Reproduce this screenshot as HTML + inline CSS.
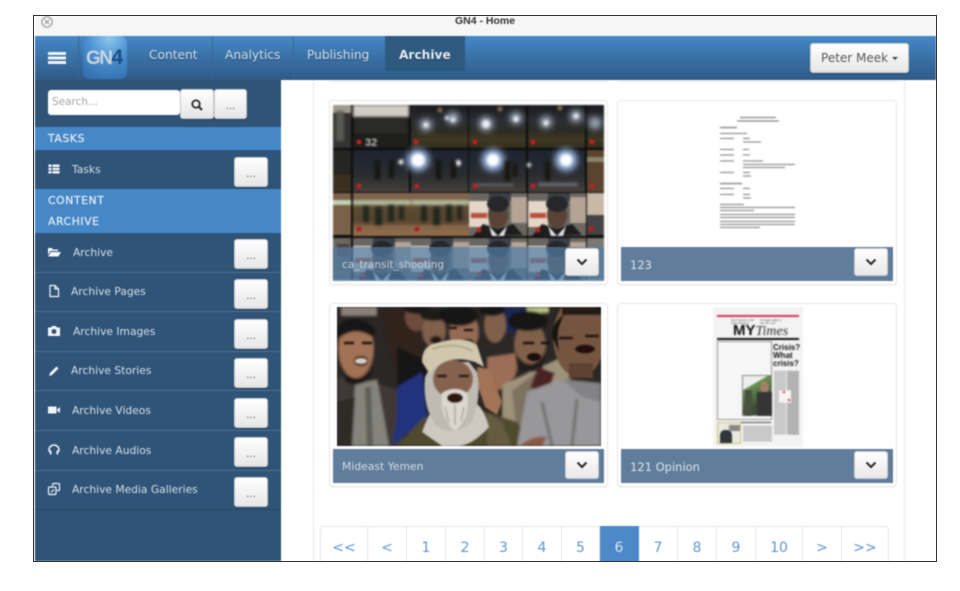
<!DOCTYPE html>
<html><head><meta charset="utf-8"><title>GN4 - Home</title>
<style>
html,body{margin:0;padding:0;background:#fff;width:960px;height:591px;overflow:hidden}
body{font-family:"DejaVu Sans","Liberation Sans",sans-serif;position:relative}
.a{position:absolute;box-sizing:border-box}
#p{left:0;top:0;width:960px;height:591px;filter:blur(.45px)}
.btn{position:absolute;box-sizing:border-box;background:linear-gradient(#fff,#e6e6e6);border:1px solid #ccc;border-radius:3px;color:#555;text-align:center;box-shadow:0 1px 1px rgba(0,0,0,.2)}
.dots{width:34px;height:30px;font-size:10px;line-height:33px;left:234px}
.nav{position:absolute;top:47px;font-size:12.2px;line-height:16px;color:#d3e2ef;text-shadow:0 1px 1px rgba(0,0,0,.4)}
.sep{position:absolute;top:36px;width:1px;height:43px;background:#33689b}
.band{position:absolute;left:35px;width:246px;background:#4587c7;color:#e6eef6;font-size:10.8px;letter-spacing:.6px;padding-left:13px;box-sizing:border-box;-webkit-text-stroke:.2px #e6eef6}
.row{position:absolute;left:35px;width:246px;height:1px;background:#52718f}
.lab{position:absolute;font-size:10.7px;line-height:14px;color:#d5dfe8;white-space:nowrap;margin-top:1px}
.ic{position:absolute;left:47px;width:14px;height:14px;fill:#f2f5f8}
.card{position:absolute;box-sizing:border-box;background:#fff;border:1px solid #e8e8e8;border-radius:4px;box-shadow:0 1px 1px rgba(0,0,0,.05)}
.bar{position:absolute;background:#617d9c;color:#dbe3ea;font-size:10.8px;line-height:36px;padding-left:9px;box-sizing:border-box;height:34px;white-space:nowrap}
.chev{position:absolute;width:34px;height:28px;background:linear-gradient(#fff,#e8e8e8);border:1px solid #ccc;border-radius:3px;box-sizing:border-box}
.chev svg{position:absolute;left:10px;top:9px;width:12px;height:8px}
.pg{position:absolute;top:526px;height:36px;border-right:1px solid #e6e6e6;border-top:1px solid #e6e6e6;box-sizing:border-box;text-align:center;color:#5f97d3;font-size:14px;line-height:42px;background:#fff}
</style></head><body>
<div class="a" id="p">
<div class="a" style="left:35px;top:16px;width:901px;height:20px;background:#f6f6f6"></div>
<svg class="a" style="left:40px;top:15px" width="14" height="14" viewBox="0 0 14 14"><circle cx="7" cy="7" r="5.2" fill="none" stroke="#8a8a8a" stroke-width="1"/><path d="M4.6 4.6l4.8 4.8M9.4 4.6l-4.8 4.8" stroke="#8a8a8a" stroke-width=".9"/></svg>
<div class="a" style="left:400px;top:15px;width:170px;text-align:center;font:bold 10.5px/13px 'Liberation Sans',sans-serif;color:#333">GN4 - Home</div>

<!-- navbar -->
<div class="a" style="left:35px;top:36px;width:901px;height:44px;background:linear-gradient(#4587c7,#2f5a85)"></div>
<div class="a" style="left:35px;top:80px;width:246px;height:47px;background:#2f5478"></div>
<div class="a" style="left:48px;top:52px;width:18px;height:3px;background:#f0f4f8;box-shadow:0 4.5px 0 #f0f4f8,0 9px 0 #f0f4f8"></div>
<div class="sep" style="left:78px"></div>
<div class="a" style="left:83px;top:36px;width:44px;height:43px;border-radius:7px;background:radial-gradient(circle at 60% 5%,#8cc6ef,#4a8fcf 45%,#2f6ba8);font:bold 19px/43px 'Liberation Sans',sans-serif;letter-spacing:-1.5px;padding-left:3px;color:#c9d6e0">GN<span style="color:#1c4d83;font-size:21px">4</span></div>
<div class="nav" style="left:149px">Content</div>
<div class="sep" style="left:212px"></div>
<div class="nav" style="left:225px">Analytics</div>
<div class="sep" style="left:293px"></div>
<div class="nav" style="left:307px">Publishing</div>
<div class="a" style="left:385px;top:36px;width:80px;height:35px;background:#2f5a80"></div>
<div class="nav" style="left:399px;font-weight:bold;color:#e4ebf2;font-size:12.2px">Archive</div>
<div class="btn" style="left:810px;top:43px;width:99px;height:30px;font-size:12px;line-height:29px;color:#5a5a5a;white-space:nowrap">Peter Meek <span style="display:inline-block;width:0;height:0;border:3.5px solid transparent;border-top-color:#444;border-bottom:0;vertical-align:2px"></span></div>

<!-- sidebar -->
<div class="a" style="left:35px;top:150px;width:246px;height:411px;background:#2f5478"></div>
<div class="a" style="left:48px;top:90px;width:132px;height:25px;background:#fff;border-radius:3px;font-size:10.5px;line-height:25px;padding-left:4px;color:#a5a5a5">Search...</div>
<div class="btn" style="left:180px;top:89px;width:34px;height:30px"><svg width="14" height="14" viewBox="0 0 14 14" style="position:absolute;left:9px;top:8px"><circle cx="6" cy="6" r="3.7" fill="none" stroke="#333" stroke-width="1.9"/><path d="M8.8 8.8l3.2 3.2" stroke="#333" stroke-width="2.2"/></svg></div>
<div class="btn" style="left:214px;top:89px;width:33px;height:30px;font-size:10px;line-height:33px">...</div>

<div class="band" style="top:127px;height:23px;line-height:23px">TASKS</div>
<div class="band" style="top:189px;height:44px;line-height:21px;padding-top:1px">CONTENT<br>ARCHIVE</div>

<svg class="ic" style="top:162px" viewBox="0 0 14 14"><path d="M1 2h12v10H1z M5 2v10 M1 5.4h12M1 8.6h12" fill="#f2f5f8" stroke="#2f5478" stroke-width=".9"/></svg>
<div class="lab" style="left:72px;top:162px">Tasks</div>
<div class="btn dots" style="top:157px">...</div>

<svg class="ic" style="top:245px" viewBox="0 0 14 14"><path d="M1 3h4l1 1.5h5V6H3.5L1 10z M4 7h10l-2.6 4.5H1z"/></svg>
<div class="lab" style="left:73px;top:245px">Archive</div>
<div class="btn dots" style="top:239px">...</div>
<div class="row" style="top:272px"></div>

<svg class="ic" style="top:284px" viewBox="0 0 14 14"><path d="M3 1.5h5l3.5 3.5v7.500H3z M8 1.5V5h3.5" fill="none" stroke="#f2f5f8" stroke-width="1.2"/></svg>
<div class="lab" style="left:71px;top:284px">Archive Pages</div>
<div class="btn dots" style="top:279px">...</div>
<div class="row" style="top:311px"></div>

<svg class="ic" style="top:324px" viewBox="0 0 14 14"><path fill-rule="evenodd" d="M1 3.500h3l1-1.500h4l1 1.500h3v8.500H1z M7 5a2.500 2.500 0 1 0 .01 0z"/></svg>
<div class="lab" style="left:73px;top:324px">Archive Images</div>
<div class="btn dots" style="top:319px">...</div>
<div class="row" style="top:351px"></div>

<svg class="ic" style="top:364px" viewBox="0 0 14 14"><path d="M9.500 2.500l2 2L5 11l-3 1 1-3z"/></svg>
<div class="lab" style="left:71px;top:363px">Archive Stories</div>
<div class="btn dots" style="top:358px">...</div>
<div class="row" style="top:390px"></div>

<svg class="ic" style="top:403px" viewBox="0 0 14 14"><path d="M1 3.500h8.500v7H1z M10 6.500l3-2.500v6l-3-2.500z"/></svg>
<div class="lab" style="left:72px;top:403px">Archive Videos</div>
<div class="btn dots" style="top:398px">...</div>
<div class="row" style="top:430px"></div>

<svg class="ic" style="top:443px" viewBox="0 0 14 14"><path d="M2 8.500V7a5 5 0 0 1 10 0v1.500" fill="none" stroke="#f2f5f8" stroke-width="1.500"/><path d="M2 7.500h2.500v4H3zM9.500 7.500H12l-1 4H9.500z"/></svg>
<div class="lab" style="left:72px;top:443px">Archive Audios</div>
<div class="btn dots" style="top:437px">...</div>
<div class="row" style="top:470px"></div>

<svg class="ic" style="top:482px" viewBox="0 0 14 14"><path d="M5.500 4V2.500a1 1 0 0 1 1-1h5a1 1 0 0 1 1 1v5a1 1 0 0 1-1 1H10M2.500 5h5.500a1 1 0 0 1 1 1v5.500a1 1 0 0 1-1 1H2.500a1 1 0 0 1-1-1V6a1 1 0 0 1 1-1zM4 10.500L7 7.500" fill="none" stroke="#f2f5f8" stroke-width="1.200"/></svg>
<div class="lab" style="left:72px;top:482px">Archive Media Galleries</div>
<div class="btn dots" style="top:477px">...</div>
<div class="row" style="top:509px;background:#274766"></div>

<!-- content -->
<div class="a" style="left:281px;top:80px;width:655px;height:481px;background:#fff"></div>
<div class="a" style="left:313px;top:80px;width:592px;height:481px;border-left:1px solid #e8e8e8;border-right:1px solid #e8e8e8"></div>
<div class="a" style="left:329px;top:80px;width:279px;height:2px;border-bottom:1px solid #e6e6e6"></div>
<div class="a" style="left:617px;top:80px;width:280px;height:2px;border-bottom:1px solid #e6e6e6"></div>

<div class="card" style="left:329px;top:100px;width:279px;height:185px"></div>
<div class="card" style="left:617px;top:100px;width:280px;height:185px"></div>
<div class="card" style="left:329px;top:303px;width:279px;height:184px"></div>
<div class="card" style="left:617px;top:303px;width:280px;height:184px"></div>

<!-- contact sheet -->
<svg class="a" style="left:333px;top:105px;filter:blur(.7px)" width="271" height="175" viewBox="0 0 271 175">
<defs>
<filter id="b1" x="-100%" y="-100%" width="300%" height="300%"><feGaussianBlur stdDeviation="1.200"/></filter>
<filter id="b2" x="-100%" y="-100%" width="300%" height="300%"><feGaussianBlur stdDeviation="3.500"/></filter>
<linearGradient id="n" x1="0" y1="0" x2="0" y2="1"><stop offset="0" stop-color="#19191b"/><stop offset=".35" stop-color="#2a2d33"/><stop offset=".6" stop-color="#2c2c24"/><stop offset=".8" stop-color="#3f3822"/><stop offset="1" stop-color="#302c1c"/></linearGradient>
<linearGradient id="n2" x1="0" y1="0" x2="0" y2="1"><stop offset="0" stop-color="#1c2430"/><stop offset=".6" stop-color="#2a2c30"/><stop offset="1" stop-color="#45403a"/></linearGradient>
<linearGradient id="t" x1="0" y1="0" x2="0" y2="1"><stop offset="0" stop-color="#8a6a50"/><stop offset=".3" stop-color="#5e4e36"/><stop offset=".6" stop-color="#55452f"/><stop offset="1" stop-color="#8c6a4a"/></linearGradient>
<g id="f"><rect width="58" height="43" fill="#6a6762"/><rect x="0" y="8" width="20" height="26" fill="#e4d6c8"/><rect x="2" y="20" width="16" height="5" fill="#b8503c"/><rect x="42" y="4" width="16" height="26" fill="#b4a496"/><rect x="20" width="22" height="8" fill="#3c4048"/><ellipse cx="29" cy="22" rx="10" ry="13" fill="#5a4234"/><ellipse cx="29" cy="11" rx="11" ry="8" fill="#27272a"/><path d="M4 43l10-12 15 5 15-5 10 11z" fill="#1d1d1d"/><path d="M20 33l9 10 9-10-3 10H23z" fill="#e8e8e8"/><circle cx="10" cy="37" r="2.500" fill="#c02020"/></g>
<g id="b"><rect width="58" height="43" fill="url(#t)"/><rect y="7" width="58" height="5" fill="#c8d8b8" opacity=".8" filter="url(#b1)"/><g fill="#24261c" filter="url(#b1)"><rect x="10" y="13" width="6" height="16"/><rect x="22" y="14" width="7" height="20"/><rect x="35" y="12" width="6" height="17"/><rect x="46" y="13" width="5" height="14"/></g><rect y="32" width="58" height="11" fill="#94704e" opacity=".6"/><circle cx="6" cy="36" r="2.500" fill="#b02020"/></g>
</defs>
<rect width="271" height="175" fill="#0c0c0c"/>
<!-- row 1 -->
<rect width="18" height="43" fill="#333230"/><rect width="18" height="8" fill="#a09a90"/><rect x="3" y="6" width="8" height="30" fill="#5a5a54" filter="url(#b1)"/>
<rect x="20" width="56" height="43" fill="#1e1e1c"/><rect x="20" width="56" height="12" fill="#d0ccc6" filter="url(#b1)"/><rect x="22" y="14" width="52" height="14" fill="#2c2c28" filter="url(#b1)"/><text x="32" y="41" font-size="11" font-weight="bold" fill="#bbb" font-family="Liberation Sans">32</text><circle cx="26" cy="37" r="2.500" fill="#c02020"/>
<rect x="78" width="57" height="43" fill="url(#n)"/><rect x="136" width="57" height="43" fill="url(#n)"/><rect x="195" width="57" height="43" fill="url(#n)"/><rect x="254" width="17" height="43" fill="url(#n)"/>
<g filter="url(#b2)" fill="#aab6c8"><circle cx="93" cy="20" r="6"/><circle cx="120" cy="13" r="6"/><circle cx="153" cy="19" r="7"/><circle cx="183" cy="13" r="6"/><circle cx="213" cy="17" r="6"/><circle cx="243" cy="11" r="6"/><circle cx="262" cy="18" r="6"/></g>
<g filter="url(#b1)" fill="#f0f4f6"><circle cx="93" cy="20" r="2.600"/><circle cx="120" cy="15" r="2.400"/><circle cx="114" cy="13" r="2"/><circle cx="153" cy="19" r="4"/><circle cx="183" cy="14" r="2.800"/><circle cx="213" cy="18" r="2.600"/><circle cx="243" cy="11" r="2.600"/></g>
<g filter="url(#b1)" fill="#b8946a"><circle cx="107" cy="5" r="2"/><circle cx="167" cy="4" r="2"/><circle cx="227" cy="3" r="2"/></g>
<g fill="#c02020"><circle cx="83" cy="37" r="2.500"/><circle cx="142" cy="37" r="2.500"/><circle cx="200" cy="37" r="2.500"/><circle cx="259" cy="37" r="2.500"/></g>
<!-- row 2 -->
<rect y="45" width="18" height="42" fill="#252622"/><rect y="70" width="18" height="17" fill="#3a3020"/>
<rect x="20" y="45" width="56" height="42" fill="url(#n2)"/>
<rect x="78" y="45" width="57" height="42" fill="url(#n2)"/><rect x="136" y="45" width="57" height="42" fill="url(#n2)"/><rect x="195" y="45" width="57" height="42" fill="url(#n2)"/>
<rect x="254" y="45" width="17" height="42" fill="#5a4430"/><rect x="254" y="52" width="17" height="5" fill="#8a8468"/>
<g filter="url(#b2)" fill="#a8c4f0"><circle cx="85" cy="55" r="11"/><circle cx="160" cy="55" r="11"/><circle cx="233" cy="55" r="11"/></g>
<g filter="url(#b1)" fill="#fff"><circle cx="85" cy="55" r="6.500"/><circle cx="160" cy="55" r="6"/><circle cx="233" cy="55" r="6"/><circle cx="68" cy="57" r="2.500"/><circle cx="125" cy="58" r="3"/><circle cx="196" cy="60" r="2"/></g>
<g fill="#12160f" filter="url(#b1)"><rect x="42" y="55" width="5" height="20"/><rect x="56" y="55" width="5" height="18"/><rect x="103" y="55" width="5" height="20"/><rect x="118" y="56" width="5" height="17"/><rect x="172" y="56" width="5" height="20"/><rect x="212" y="56" width="5" height="20"/><rect x="180" y="58" width="4" height="14"/></g>
<g fill="#6c7078" filter="url(#b1)"><rect x="205" y="78" width="40" height="3"/><rect x="140" y="79" width="40" height="2"/></g>
<g fill="#c02020"><circle cx="26" cy="81" r="2.500"/><circle cx="84" cy="81" r="2.500"/><circle cx="142" cy="81" r="2.500"/><circle cx="200" cy="81" r="2.500"/><circle cx="259" cy="81" r="2.500"/></g>
<!-- row 3 -->
<rect y="88" width="18" height="42" fill="#7a6248"/><rect y="95" width="18" height="5" fill="#c0d0b0"/>
<use href="#b" x="20" y="88"/><use href="#b" x="78" y="88"/>
<use href="#f" x="136" y="88"/><use href="#f" x="195" y="88"/>
<rect x="254" y="88" width="17" height="42" fill="#c8b8a8"/><rect x="254" y="110" width="17" height="20" fill="#444"/><circle cx="258" cy="124" r="2.500" fill="#c02020"/>
<!-- row 4 -->
<rect y="133" width="18" height="42" fill="#6a6762"/><rect x="4" y="139" width="12" height="12" fill="#514038"/>
<use href="#f" x="20" y="133"/><use href="#f" x="78" y="133"/><use href="#f" x="136" y="133"/><use href="#f" x="195" y="133"/>
<rect x="254" y="133" width="17" height="42" fill="#7a7672"/>
<rect y="172" width="271" height="3" fill="#0c0c0c" opacity="0"/>
</svg>
<div class="bar" style="left:333px;top:247px;width:271px;background:rgba(80,125,165,.72);color:#c3ced8;font-size:10.5px">ca_transit_shooting</div>
<div class="chev" style="left:565px;top:248px"><svg viewBox="0 0 12 8"><path d="M1.500 1.500L6 6l4.500-4.500" fill="none" stroke="#333" stroke-width="2.200"/></svg></div>

<!-- doc page -->
<svg class="a" style="left:720px;top:116px;filter:blur(.55px)" width="76" height="114" viewBox="0 0 76 114"><g fill="#666">
<rect x="20" y="1" width="36" height="1"/><rect x="17" y="4.500" width="42" height="1"/>
<rect x="0" y="11" width="17" height="1.100"/><rect x="0" y="17" width="27" height=".9"/>
<rect x="0" y="22" width="14" height=".9"/><rect x="23" y="22" width="7" height=".9"/><rect x="23" y="25.500" width="18" height=".9"/>
<rect x="0" y="33" width="14" height=".9"/><rect x="23" y="33" width="6" height=".9"/>
<rect x="0" y="38.500" width="14" height=".9"/><rect x="23" y="38.500" width="7" height=".9"/>
<rect x="0" y="44.500" width="14" height=".9"/><rect x="23" y="44.500" width="20" height=".9"/><rect x="23" y="48" width="52" height=".9"/><rect x="23" y="51" width="42" height=".9"/>
<rect x="0" y="56" width="14" height=".9"/><rect x="23" y="56" width="7" height=".9"/><rect x="23" y="59.500" width="8" height=".9"/>
<rect x="0" y="67" width="22" height="1.100"/>
<rect x="0" y="72" width="14" height=".9"/><rect x="23" y="72" width="7" height=".9"/>
<rect x="0" y="78" width="14" height=".9"/><rect x="23" y="78" width="7" height=".9"/><rect x="23" y="81.500" width="8" height=".9"/>
<rect x="0" y="88" width="24" height=".9"/><rect x="0" y="91" width="75" height=".9"/><rect x="0" y="94" width="34" height=".9"/>
<rect x="0" y="98" width="75" height=".9"/><rect x="0" y="101" width="75" height=".9"/>
<rect x="0" y="105" width="75" height=".9"/><rect x="0" y="108" width="75" height=".9"/><rect x="0" y="111" width="40" height=".9"/>
</g></svg>
<div class="bar" style="left:621px;top:247px;width:272px;font-size:11.5px">123</div>
<div class="chev" style="left:854px;top:248px"><svg viewBox="0 0 12 8"><path d="M1.500 1.500L6 6l4.500-4.500" fill="none" stroke="#333" stroke-width="2.200"/></svg></div>

<!-- yemen -->
<svg class="a" style="left:337px;top:307px" width="264" height="139" viewBox="0 0 264 139">
<defs><filter id="y"><feGaussianBlur stdDeviation="1.300"/></filter><filter id="ys"><feGaussianBlur stdDeviation=".7"/></filter></defs>
<rect width="264" height="139" fill="#2b2725"/>
<g filter="url(#y)">
<rect x="4" y="0" width="36" height="9" fill="#8a8078"/>
<rect x="150" y="0" width="40" height="26" fill="#1a2650"/>
<rect x="190" y="0" width="22" height="6" fill="#b8c080"/>
<path d="M45 5 L72 2 L92 60 L70 85 L50 40z" fill="#33241e"/>
<path d="M60 40L105 60 100 95 70 110 60 80z" fill="#171518"/>
<ellipse cx="80" cy="10" rx="12" ry="14" fill="#6d4c3c"/><ellipse cx="80" cy="1" rx="13" ry="6" fill="#1c1818"/>
<ellipse cx="97" cy="24" rx="12" ry="16" fill="#80604c"/><ellipse cx="97" cy="8" rx="14" ry="6" fill="#1e1a18"/><ellipse cx="99" cy="33" rx="6" ry="4" fill="#1a1212"/>
<ellipse cx="127" cy="25" rx="15" ry="20" fill="#946a52"/><ellipse cx="122" cy="9" rx="19" ry="10" fill="#131214"/>
<ellipse cx="158" cy="18" rx="11" ry="18" fill="#80604a"/><ellipse cx="155" cy="3" rx="13" ry="6" fill="#141418"/>
<path d="M150 50 L185 45 L178 70 L160 85 L150 70z" fill="#9c6e56"/>
<path d="M165 78 L225 50 L235 70 L200 100 L190 139 L165 120z" fill="#9f927a"/>
<path d="M175 84 L200 65 L195 95 L180 125z" fill="#7d7160"/>
<ellipse cx="193" cy="38" rx="16" ry="23" fill="#80604a"/><ellipse cx="191" cy="14" rx="20" ry="10" fill="#181414"/><path d="M178 45 q15 24 30 0 l-2 16 q-13 8 -26 0z" fill="#221b1a"/>
<rect x="197" y="62" width="18" height="22" fill="#4c2222" transform="rotate(20 205 72)"/>
<path d="M0 70 L28 72 L65 85 L68 139 L0 139z" fill="#3f3935"/>
<path d="M18 78 L40 72 L52 139 L15 139z" fill="#84847c"/>
<path d="M28 80 L34 80 L36 139 L30 139z" fill="#5e5e58"/>
<path d="M0 95 L18 90 L15 139 L0 139z" fill="#2f2a27"/>
<ellipse cx="19" cy="42" rx="18" ry="29" fill="#a17254"/><path d="M0 20 Q18 2 38 22 L37 31 Q18 17 0 33z" fill="#181414"/>
<ellipse cx="24" cy="54" rx="7" ry="5" fill="#2f1614"/><path d="M8 66 Q22 78 36 62 L32 72 Q20 82 8 74z" fill="#1c1514"/>
<path d="M60 80 L85 65 L90 110 L55 139 L60 110z" fill="#24337c"/>
<path d="M60 139 L85 112 L110 100 L150 105 L180 115 L200 139z" fill="#4f482f"/>
<path d="M150 105 L165 115 L175 139 L150 139z" fill="#645c40"/>
<path d="M180 139 L190 85 L225 72 L264 76 L264 139z" fill="#989799"/>
<path d="M225 72 L264 76 L264 95 L245 90z" fill="#838385"/>
<path d="M205 95 L215 139 M240 92 L235 139" stroke="#6e6e70" stroke-width="3" fill="none"/>
<path d="M183 139 Q195 128 210 130 L205 139z" fill="#8a5a48"/>
</g>
<g filter="url(#ys)">
<ellipse cx="242" cy="30" rx="26" ry="40" fill="#75553f"/><path d="M215 30 Q215 0 264 0 L230 0 L222 20 Q220 28 222 45z" fill="#161210"/><rect x="225" y="0" width="39" height="8" fill="#201a18"/>
<path d="M222 31 h14M248 29 h14" stroke="#140e0c" stroke-width="2.800"/><ellipse cx="248" cy="42" rx="10" ry="4.500" fill="#231010"/><rect x="232" y="56" width="24" height="15" fill="#5e4232"/>
<path d="M186 36 h11M204 36 h9" stroke="#140e0c" stroke-width="2.200"/><ellipse cx="197" cy="50" rx="7" ry="4" fill="#1e0e0e"/>
<path d="M7 36 h10M25 36 h10" stroke="#140e0c" stroke-width="2.200"/><ellipse cx="24" cy="54" rx="6" ry="3" fill="#d8cfc8"/>
<path d="M127 23h9M112 21 h8" stroke="#140e0c" stroke-width="2"/><ellipse cx="130" cy="36" rx="7" ry="4" fill="#241412"/>
<path d="M85 125 Q100 82 118 100 Q142 82 152 120 Q135 139 120 139 L105 139Z" fill="#cdc9c1"/>
<path d="M88 70 Q85 100 100 120 Q118 130 135 115 Q145 90 140 65 L132 55 L96 55z" fill="#bfbbb3"/>
<ellipse cx="116" cy="72" rx="20" ry="19" fill="#85624e"/>
<path d="M100 69h10M122 69h10" stroke="#21150f" stroke-width="2.800"/>
<path d="M105 86 Q118 78 130 86 Q134 110 118 124 Q102 110 105 86z" fill="#dcd8d0"/>
<path d="M108 100 l4 16 M118 98 v20 M127 100 l-3 14" stroke="#9e9a92" stroke-width="1.200"/>
<ellipse cx="118" cy="91" rx="8" ry="5" fill="#2e1411"/>
<path d="M85 55 Q85 38 100 36 Q125 28 140 38 L147 60 L138 55 Q110 46 92 66z" fill="#d0c7ae"/>
<path d="M95 42 Q118 34 135 44" stroke="#a89f88" stroke-width="1.500" fill="none"/>
<path d="M140 60 L152 62 L165 95 L160 108 L148 100 L142 82z" fill="#a27354"/>
</g>
</svg>
<div class="bar" style="left:333px;top:449px;width:271px;color:#d3dbe3">Mideast Yemen</div>
<div class="chev" style="left:565px;top:451px"><svg viewBox="0 0 12 8"><path d="M1.500 1.500L6 6l4.500-4.500" fill="none" stroke="#333" stroke-width="2.200"/></svg></div>

<!-- newspaper -->
<div class="a" style="left:713px;top:307px;width:90px;height:140px;background:#f3f3f3;overflow:hidden;font-family:'Liberation Sans',sans-serif;filter:blur(.4px)">
<div class="a" style="left:4px;top:8px;width:82px;height:2px;background:#d8305a"></div>
<div class="a" style="left:18px;top:12px;font-size:3px;line-height:3px;color:#444;width:24px">Don't panic in the<br>right direction</div>
<div class="a" style="left:47px;top:12px;font-size:3px;line-height:3px;color:#444;width:24px">A single spike in<br>the UK now</div>
<div class="a" style="left:20px;top:16px;font:bold 15px/16px 'Liberation Sans',sans-serif;color:#111;white-space:nowrap">MY<span style="font:italic 14px 'Liberation Serif',serif;font-weight:normal;color:#333">Times</span></div>
<div class="a" style="left:4px;top:31px;width:82px;height:2px;background:#111"></div>
<div class="a" style="left:4px;top:34px;width:55px;height:79px;border:1px solid #999;background:#f6f6f6"></div>
<div class="a" style="left:29px;top:68px;width:30px;height:41px;border:1px solid #888;background:linear-gradient(150deg,#eee 25%,#6a9a50 26%,#5a7a48 40%,#3e4a38 70%)"><div class="a" style="left:17px;top:5px;width:9px;height:12px;border-radius:50%;background:#a08068"></div><div class="a" style="left:14px;top:16px;width:15px;height:24px;background:#353535"></div><div class="a" style="left:2px;top:14px;width:7px;height:26px;background:#4a5040"></div></div>
<div class="a" style="left:60px;top:37px;font:bold 8px/8px 'Liberation Sans',sans-serif;color:#111">Crisis?<br>What<br>crisis?</div>
<div class="a" style="left:61px;top:64px;width:12px;height:64px;background:repeating-linear-gradient(#aaa 0 1px,#e8e8e8 1px 2px)"></div>
<div class="a" style="left:74px;top:64px;width:12px;height:64px;background:repeating-linear-gradient(#999 0 1px,#ccc 1px 2px)"></div>
<div class="a" style="left:66px;top:83px;width:12px;height:13px;background:#f3f3f3"></div>
<div class="a" style="left:70px;top:84px;width:2px;height:2px;background:#d03040"></div>
<div class="a" style="left:75px;top:92px;width:2px;height:2px;background:#d03040"></div>
<div class="a" style="left:4px;top:115px;width:24px;height:22px;background:#e8e8e0;border:1px solid #c8c878"></div>
<div class="a" style="left:7px;top:123px;width:12px;height:13px;background:#33353a;border-radius:5px 5px 0 0"></div>
<div class="a" style="left:16px;top:118px;width:11px;height:6px;background:#888"></div>
<div class="a" style="left:30px;top:119px;width:29px;height:16px;background:repeating-linear-gradient(#aaa 0 1px,#e8e8e8 1px 2px)"></div>
<div class="a" style="left:28px;top:115px;width:30px;height:1px;background:#444"></div>
</div>
<div class="bar" style="left:621px;top:449px;width:272px;font-size:11.5px">121 Opinion</div>
<div class="chev" style="left:854px;top:451px"><svg viewBox="0 0 12 8"><path d="M1.500 1.500L6 6l4.500-4.500" fill="none" stroke="#333" stroke-width="2.200"/></svg></div>

<!-- pagination -->
<div class="pg" style="left:320px;width:48px;border-left:1px solid #e6e6e6;border-radius:4px 0 0 0">&lt;&lt;</div>
<div class="pg" style="left:368px;width:39px">&lt;</div>
<div class="pg" style="left:407px;width:39px">1</div>
<div class="pg" style="left:446px;width:39px">2</div>
<div class="pg" style="left:485px;width:38px">3</div>
<div class="pg" style="left:523px;width:39px">4</div>
<div class="pg" style="left:562px;width:38px">5</div>
<div class="pg" style="left:600px;width:39px;background:#4d88c9;color:#dbe7f3;border-color:#4d88c9">6</div>
<div class="pg" style="left:639px;width:39px">7</div>
<div class="pg" style="left:678px;width:39px">8</div>
<div class="pg" style="left:717px;width:39px">9</div>
<div class="pg" style="left:756px;width:47px">10</div>
<div class="pg" style="left:803px;width:39px">&gt;</div>
<div class="pg" style="left:842px;width:47px;border-radius:0 4px 0 0">&gt;&gt;</div>
</div>

<!-- frame -->
<div class="a" style="left:33px;top:15px;width:904px;height:547px;border:1.500px solid #333;pointer-events:none"></div>
<div class="a" style="left:0;top:562px;width:960px;height:29px;background:#fff"></div>
</body></html>
